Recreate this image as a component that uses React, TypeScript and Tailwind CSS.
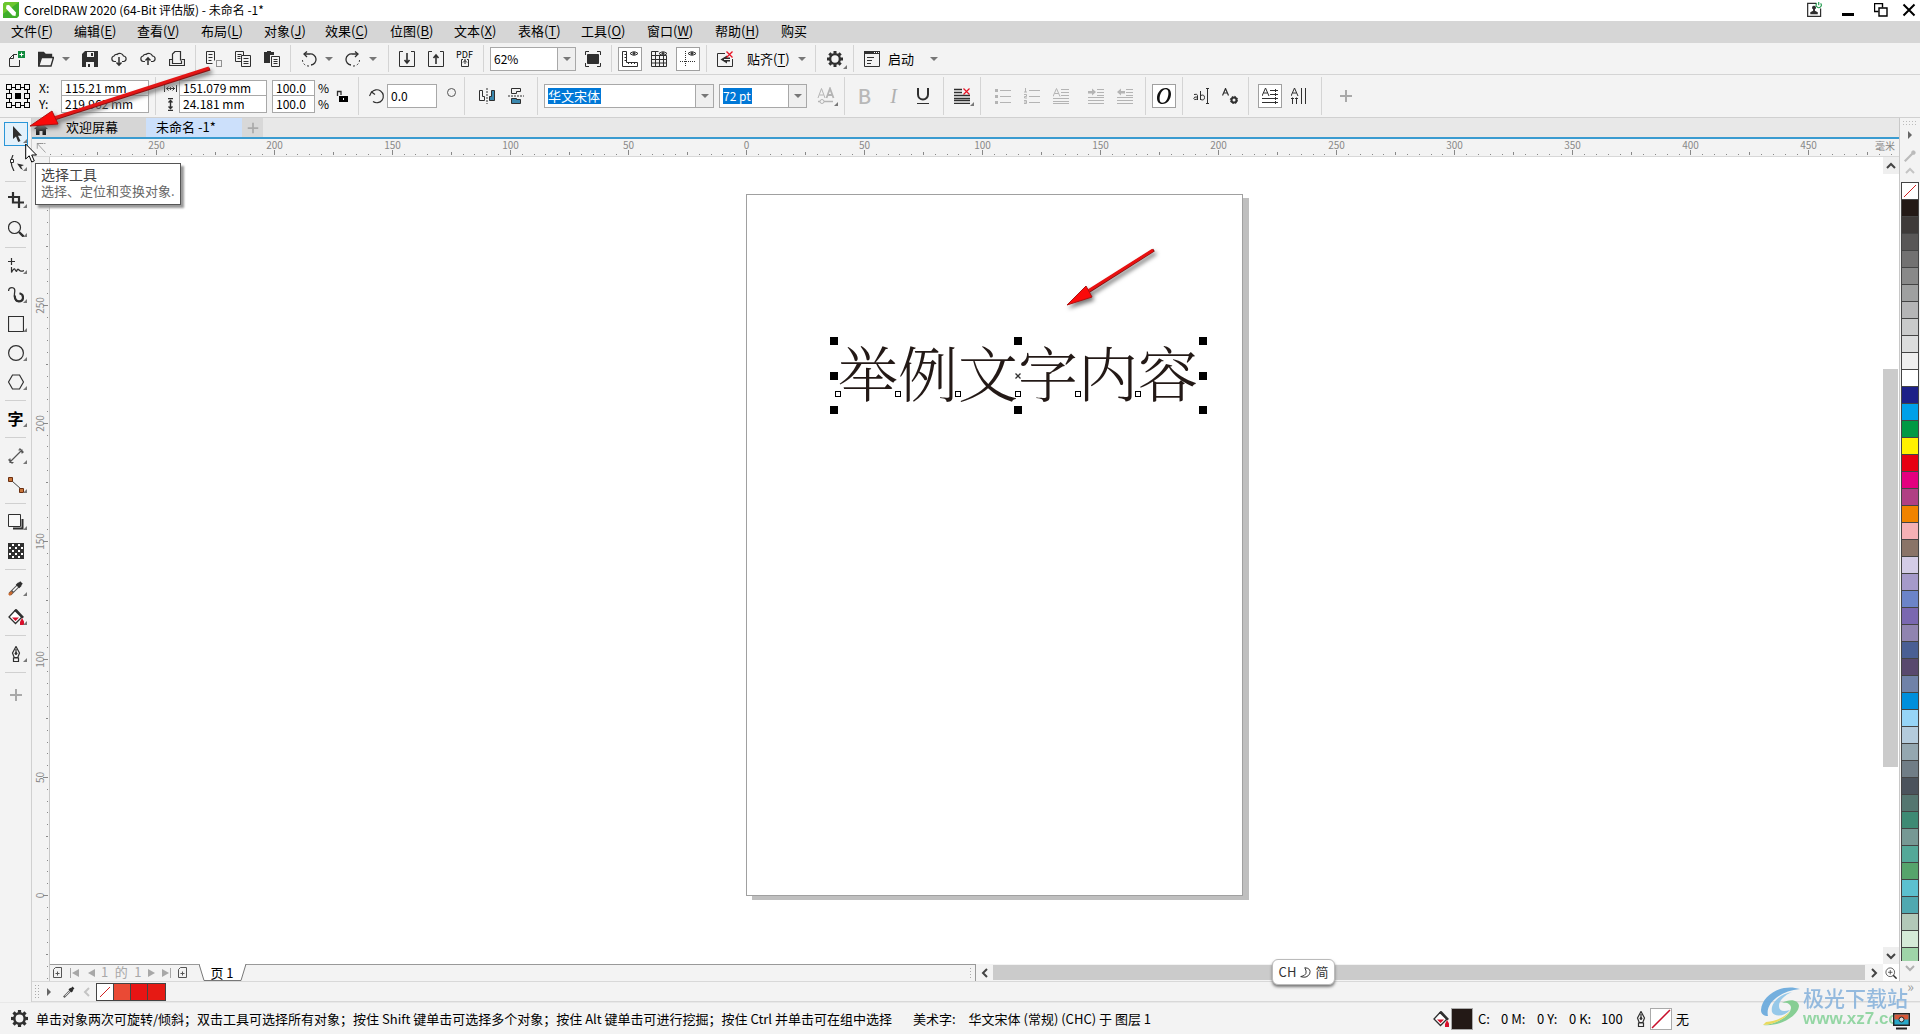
import React from "react";
import type { ReactNode } from "react";

const INK = "#2f2f2f";

/* ---------- icon base ---------- */

function Ico({ children, size = 16, box = 16, stroke = INK, sw = 1, fill = "none" }: {
  children: ReactNode; size?: number; box?: number; stroke?: string; sw?: number; fill?: string;
}) {
  return (
    <svg width={size} height={size} viewBox={`0 0 ${box} ${box}`} fill={fill} stroke={stroke} strokeWidth={sw} className="block shrink-0" aria-hidden="true">
      {children}
    </svg>
  );
}

const gearTeeth = [0, 45, 90, 135, 180, 225, 270, 315];
function Gear({ size = 16 }: { size?: number }) {
  return (
    <Ico size={size}>
      <circle cx="8" cy="8" r="4.9" strokeWidth="2.4" />
      {gearTeeth.map((a) => (
        <rect key={a} x="6.5" y="0" width="3" height="2.6" fill={INK} stroke="none" transform={`rotate(${a} 8 8)`} />
      ))}
    </Ico>
  );
}

const I = {
  create: (
    <Ico>
      <path d="M8 3.500H4.500L.5 7.500v8h10V9M4.500 3.500v4h-4" />
      <path d="M9 0h7v7H9z" fill="#108a3c" stroke="none" />
      <path d="M12.500 1.500v4M10.500 3.500h4" stroke="#fff" />
    </Ico>
  ),
  open: (
    <Ico>
      <path d="M.5 15V1.500h5l2 2h6V6" strokeWidth="1.400" />
      <path d="M3.500 6.500h12l-2.500 8.500H.7z" strokeWidth="1.400" />
      <path d="M.5 1.500h5l2 2h6V6h-10L1 13z" fill={INK} stroke="none" />
    </Ico>
  ),
  save: (
    <Ico>
      <path d="M3 0h13v16H0V3z" fill={INK} stroke="none" />
      <path d="M5 1h7v5H5zM4 11h8v5H4z" fill="#f3f3f3" stroke="none" />
      <path d="M9 2h2v3H9zM6 13h2v3H6z" fill={INK} stroke="none" />
    </Ico>
  ),
  cloudDown: (
    <Ico>
      <path d="M5 10.500H3.300a2.800 2.800 0 0 1-.3-5.500A3 3 0 0 1 6 3.500 4 4 0 0 1 12.500 5a2.800 2.800 0 0 1 .5 5.500h-2" strokeWidth="1.200" />
      <path d="M8 6v8M5.500 11.500 8 14.200l2.500-2.700" strokeWidth="1.500" />
    </Ico>
  ),
  cloudUp: (
    <Ico>
      <path d="M5 10.500H3.300a2.800 2.800 0 0 1-.3-5.500A3 3 0 0 1 6 3.500 4 4 0 0 1 12.500 5a2.800 2.800 0 0 1 .5 5.500h-2" strokeWidth="1.200" />
      <path d="M8 14V7M5.500 9.500 8 6.800l2.500 2.700" strokeWidth="1.500" />
    </Ico>
  ),
  print: (
    <Ico>
      <path d="M3.500 9.500V3L6 .5h5.500v9M3.500 8.500h-3v6h15v-6h-3M3.500 9.500v3h9v-3" strokeWidth="1.200" />
    </Ico>
  ),
  cut: (
    <Ico>
      <path d="M8.500 9.500V.5h-8v12h6M2.500 3.500h4M2.500 6.500h4M2.500 9.500h3" />
      <path d="M10.500 9.500h5v6h-5z" strokeDasharray="1 1" />
    </Ico>
  ),
  copy: (
    <Ico>
      <path d="M6 10.500H.5V.5h8V4M2.500 3.500h4M2.500 5.500h3M2.500 7.500h3" />
      <path d="M6.500 4.500h9v11h-9zM8.500 7.500h5M8.500 10.500h5M8.500 12.500h5" />
    </Ico>
  ),
  paste: (
    <Ico>
      <path d="M0 1h3V0h4v1h3v3H6v8H0z" fill={INK} stroke="none" />
      <path d="M7.500 5.500h8v10h-8zM9.500 8.500h4M9.500 10.500h4M9.500 12.500h4" />
    </Ico>
  ),
  undo: (
    <Ico>
      <path d="M4 3h5a5.500 5.500 0 0 1 1 11" strokeWidth="1.300" />
      <path d="M8 15a6 6 0 0 1-6.500-6" strokeDasharray="2 2" />
      <path d="M6 .5 3 3l3 3" strokeWidth="1.300" />
    </Ico>
  ),
  redo: (
    <Ico>
      <path d="M12 3H7a5.500 5.500 0 0 0-1 11" strokeWidth="1.300" />
      <path d="M8 15a6 6 0 0 0 6.500-6" strokeDasharray="2 2" />
      <path d="M10 .5 13 3l-3 3" strokeWidth="1.300" />
    </Ico>
  ),
  imp: (
    <Ico>
      <path d="M4 .5H.5v15h15V.5H12" />
      <path d="M8 2v10M5.500 9 8 12l2.500-3" strokeWidth="1.600" />
    </Ico>
  ),
  exp: (
    <Ico>
      <path d="M4 .5H.5v15h15V.5H12" />
      <path d="M8 13V4M5.500 7 8 4l2.500 3" strokeWidth="1.600" />
    </Ico>
  ),
  full: (
    <Ico>
      <path d="M2.500 3.500h11v9h-11z" fill={INK} />
      <path d="M.5 4V.5H4M12 .5h3.500V4M15.500 12v3.500H12M4 15.500H.5V12" />
    </Ico>
  ),
  ruler: (
    <Ico>
      <path d="M.5.5h4v11h11v4H.5zM2.500 3.500h2M2.500 6.500h2M2.500 9.500h2M6.500 13v-1.500M9.500 13v-1.500M12.500 13v-1.500" />
      <path d="M8 2.500q4-3.500 8 0-4 3.500-8 0z" />
      <circle cx="12" cy="2.500" r="1" fill={INK} />
    </Ico>
  ),
  grid: (
    <Ico>
      <path d="M.5 15.500V.5h7M.5 15.500h15v-11M.5 4.500h15M.5 8.500h15M.5 12h15M4.500.5v15M8.500 4v11.500M12.500 5v10" />
      <path d="M8 2.500q4-3.500 8 0-4 3.500-8 0z" />
      <circle cx="12" cy="2.500" r="1" fill={INK} />
    </Ico>
  ),
  guides: (
    <Ico>
      <path d="M5.500 0v16M0 10.500h16" strokeDasharray="1 1" />
      <path d="M8 2.500q4-3.500 8 0-4 3.500-8 0z" />
      <circle cx="12" cy="2.500" r="1" fill={INK} />
    </Ico>
  ),
  snapOff: (
    <Ico>
      <path d="M8 2.500H.5v13h15V8" />
      <path d="M10 4.500 3.500 8.500l6.500 4V10.500h3V6.500h-3z" fill={INK} stroke="none" />
      <path d="M7 8.500h6" stroke="#f3f3f3" />
      <path d="m9.500.5 6 6m0-6-6 6" stroke="#e81123" strokeWidth="1.300" />
    </Ico>
  ),
  launch: (
    <Ico>
      <path d="M.5.5h15v15H.5zM3 6.500h7M3 9.500h5M3 12.500h4" />
      <path d="M0 0h16v3H0z" fill={INK} stroke="none" />
      <path d="M10 1.500h1M12 1.500h1M14 1.500h1" stroke="#fff" />
    </Ico>
  ),
  alignX: (
    <Ico>
      <path d="M0 1.500h8M0 4.500h8M0 7.500h16M0 10.500h16M0 12.500h16M0 15.500h16" strokeWidth="1.300" />
      <path d="m9.500.5 6 6m0-6-6 6" stroke="#e81123" strokeWidth="1.200" />
    </Ico>
  ),
  bullets: (
    <Ico stroke="#b4b4b4">
      <path d="M5 2.500h11M5 8.500h11M5 14.500h11" />
      <path d="M0 1h3v3H0zM0 7h3v3H0zM0 13h3v3H0z" fill="#b4b4b4" stroke="none" />
    </Ico>
  ),
  numbers: (
    <Ico stroke="#b4b4b4">
      <path d="M5 2.500h11M5 8.500h11M5 14.500h11M1.500 0v4M0 4h3M0 6.500h2.500v2H.5v1.500H3M0 12.500h2.500v3H0M0 14h2" />
    </Ico>
  ),
  dropCap: (
    <Ico stroke="#b4b4b4">
      <path d="M0 8.500 3.500.5 7 8.500M1.500 5.500h4M8 1.500h8M8 4.500h8M8 7.500h8M0 10.500h16M0 13.500h16M0 15.500h16" />
    </Ico>
  ),
  indent: (
    <Ico stroke="#b4b4b4">
      <path d="M9 1.500h7M9 4.500h7M9 7.500h7M0 9.500h16M0 12.500h16M0 15.500h16" />
      <path d="M0 3h4V.5L8 4 4 7.500V5.500H0z" fill="#b4b4b4" stroke="none" />
    </Ico>
  ),
  outdent: (
    <Ico stroke="#b4b4b4">
      <path d="M9 1.500h7M9 4.500h7M9 7.500h7M0 9.500h16M0 12.500h16M0 15.500h16" />
      <path d="M8 3H4V.5L0 4l4 3.500V5.500h4z" fill="#b4b4b4" stroke="none" />
    </Ico>
  ),
  horizText: (
    <Ico>
      <path d="M0 8 3.500 0 7 8M1.500 5h4M8 2.500h8M8 6.500h8M0 10.500h16M0 14.500h16M13.500 1v3M13.500 5v3M13.500 9v3M13.500 13v3" />
    </Ico>
  ),
  vertText: (
    <Ico>
      <path d="M0 8 3.500 0 7 8M1.500 5h4M1.500 9.500v6.500M5.500 9.500v6.500M10.500 0v16M14.500 0v16M0 10.500h3M4 10.500h3" />
    </Ico>
  ),
  charGear: (
    <svg width="16" height="16" viewBox="0 0 16 16" fill="none" stroke={INK} className="block" aria-hidden="true">
      <path d="M.5 7.500 3.500.5l3 7M1.500 5h4" strokeWidth="1.200" />
      <circle cx="12" cy="12" r="2.500" strokeWidth="2" />
      <circle cx="12" cy="12" r="3.700" strokeWidth="1" strokeDasharray="1.500 1.400" />
    </svg>
  ),
  editText: (
    <Ico>
      <path d="M13 .5h3M13 15.500h3M14.500 1v14M1 6.500q3.500-1 3.500 1V12M4.500 9Q.8 8.500.8 10.500t3.700.5M7.500 3v9M7.500 7.500q4-1.500 4 2t-4 2" />
    </Ico>
  ),
  outlineA: (
    <Ico stroke="#b4b4b4" size={18} box={18}>
      <path d="M1 11 4.500 1.500 8 11M2.500 8h4" />
      <path d="M9.500 11 13 1.500 16.500 11M11 8h4" strokeWidth="1.800" />
      <path d="M1 14.500h15" strokeWidth="1.500" />
      <circle cx="5" cy="14.500" r="2" fill="#f3f3f3" />
    </Ico>
  ),
  mirrorH: (
    <Ico>
      <path d="M.5 2.500h3v6h2v4h-5z" />
      <path d="M15.500 2.500h-3v6h-2v4h5z" fill="#3a87ad" />
      <path d="M8 0v16" strokeDasharray="2 1" />
    </Ico>
  ),
  mirrorV: (
    <Ico>
      <path d="M12.500.5v3h-4v2h-5V.5z" />
      <path d="M12.500 15.500v-4h-4v-1h-5v5z" fill="#3a87ad" />
      <path d="M0 8h16" strokeDasharray="2 1" />
    </Ico>
  ),
  rotate: (
    <Ico>
      <path d="M2.500 4.500A6.500 6.500 0 1 1 4 13.500" strokeWidth="1.200" />
      <path d="M.5 8 2.500 4l3.500 2.500" strokeWidth="1.200" />
    </Ico>
  ),
  widthI: (
    <Ico size={13} box={13}>
      <path d="M.5 3v7M12.500 3v7M2 6.500h9M4.500 4.500l-2 2 2 2M8.500 4.500l2 2-2 2M6.500 5v3" />
    </Ico>
  ),
  heightI: (
    <Ico size={13} box={13}>
      <path d="M4 .5h5M4 12.500h5M6.500 2v9M4.500 4.500l2-2 2 2M4.500 8.500l2 2 2-2" strokeWidth="1.400" />
    </Ico>
  ),
  lock: (
    <Ico size={13} box={13}>
      <path d="M1.500 6V1.500h3.500V5" strokeWidth="1.300" />
      <path d="M3 6h9v6H3z" fill="#000" stroke="none" />
      <path d="M7.500 8v2" stroke="#fff" />
    </Ico>
  ),
};

const T = {
  pick: <Ico><path d="M5 0v13l3-2.500L10.200 16l2.300-1L10 9.800h4z" fill={INK} stroke="none" /></Ico>,
  shape: (
    <Ico>
      <path d="M5 0Q1 8 6 16" strokeWidth="1.200" />
      <path d="M2.500 4.500h3v3h-3z" fill="#fff" />
      <path d="M9 8.500 16 10l-3 1.500L15 15l-2.500-1.500z" fill={INK} stroke="none" />
    </Ico>
  ),
  crop: <Ico sw={2.2}><path d="M5 0v10.500h11M0 5h11v11" strokeWidth="2.200" /></Ico>,
  zoom: (
    <Ico>
      <circle cx="6.500" cy="6.500" r="6" strokeWidth="1.200" />
      <path d="m11 11 5 5" strokeWidth="2.400" />
    </Ico>
  ),
  free: <Ico><path d="M3.500 0v7M0 3.500h7M3.500 9v5.500q2.500-5 3.500-3t1.500 2q1-3 2-2t2 1.500 3.500-.5" strokeWidth="1.200" /></Ico>,
  art: (
    <Ico>
      <path d="M.6 4Q.6.7 4 .7 7.500.7 6.600 5.500 5.500 14.500 11 14.500" strokeWidth="1.300" />
      <path d="M6.700 8.500Q7 14.300 11 14.300q4 0 4-4 0-3-3.500-4" strokeWidth="2.200" />
    </Ico>
  ),
  rect: <Ico><path d="M.5.5h15v15H.5z" strokeWidth="1.200" /></Ico>,
  ellipse: <Ico><circle cx="8" cy="8" r="7.400" strokeWidth="1.200" /></Ico>,
  poly: <Ico><path d="M4.500 1h7L15.500 8l-4 7h-7L.5 8z" strokeWidth="1.200" /></Ico>,
  text: <span className="pb-0.5 text-base font-bold leading-4">字</span>,
  dim: <Ico stroke="#555"><path d="M2.500 13.500l11-11M.5 11.500l4 4M11.500.5l4 4M2 10.500v4h3.500M10.500 2h3.500v3.500" strokeWidth="1.200" /></Ico>,
  conn: (
    <Ico stroke="#6b2f10">
      <path d="m4 4 9 8" stroke="#444" />
      <path d="M.5.5h4v4h-4zM11.500 11.500h4v4h-4z" fill="#c87438" />
    </Ico>
  ),
  shadow: (
    <Ico>
      <path d="M14.500 5v9.500H5" strokeWidth="2" />
      <path d="M.5.5h12v12H.5z" fill="#f8f8f8" />
    </Ico>
  ),
  checker: (
    <svg width="16" height="16" viewBox="0 0 16 16" shapeRendering="crispEdges" className="block" aria-hidden="true">
      <path d="M0 0h16v16H0z" fill={INK} />
      {Array.from({ length: 25 }, (_, i) => i).filter((i) => i % 2 === 1).map((i) => (
        <rect key={i} x={1 + (i % 5) * 3} y={1 + Math.floor(i / 5) * 3} width="2" height="2" fill="#fff" />
      ))}
    </svg>
  ),
  dropper: (
    <Ico>
      <path d="m2 14 8-8" strokeWidth="3.600" stroke="#555" />
      <path d="m5 11 5-5" strokeWidth="1.600" stroke="#fff" />
      <path d="m1 15 3-3" strokeWidth="2.600" stroke="#c8682e" />
      <path d="M9 3.500 12.500 7M11 5l2.500-2.500" strokeWidth="3.600" />
    </Ico>
  ),
  fill: (
    <Ico>
      <path d="M7.500 1 14 8l-6.500 6.500L1 8z" fill="#fff" strokeWidth="1.300" />
      <path d="M6 1.500 8.500 0 16 8l-2 1.500z" fill={INK} stroke="none" />
      <path d="M4 8.500h7L7.500 12zM14 9l2 3.500V16h-4v-3z" fill="#d8102c" stroke="none" />
    </Ico>
  ),
  pen: (
    <Ico>
      <path d="M8 .5 4.500 7l1.700 4.500h3.600L11.500 7zM8 3v5M5.500 12h5v3.500h-5z" strokeWidth="1.200" />
      <circle cx="8" cy="7.500" r="1" fill={INK} />
    </Ico>
  ),
  plus: <Ico stroke="#a9a9a9"><path d="M8 2v12M2 8h12" strokeWidth="2" /></Ico>,
};

/* ---------- small parts ---------- */

function Corner() {
  return <svg width="4" height="4" viewBox="0 0 4 4" className="absolute right-0 bottom-0.5" aria-hidden="true"><path d="M4 0v4H0z" fill="#777" /></svg>;
}
function Cell({ label, children, on, corner }: { label: string; children: ReactNode; on?: boolean; corner?: boolean }) {
  return (
    <div className="flex w-[29px] shrink-0 justify-center">
      <button aria-label={label} className={on ? "relative flex size-6 items-center justify-center border border-[#a0a0a0] bg-white" : "relative flex size-6 items-center justify-center"}>
        {children}
        {corner && <Corner />}
      </button>
    </div>
  );
}
function Tri() {
  return <svg width="8" height="4" viewBox="0 0 8 4" className="block" aria-hidden="true"><path d="M0 0h8L4 4z" fill="#777" /></svg>;
}
function Caret({ label }: { label: string }) {
  return <button aria-label={label} className="flex h-6 w-[11px] shrink-0 items-center justify-center"><Tri /></button>;
}
function Sep() {
  return <div className="flex w-2 shrink-0 justify-center self-stretch py-0.5"><div className="w-px bg-[#d4d4d4]" /></div>;
}

const menus: [string, string, string][] = [
  ["文件", "F", "w-[63px]"], ["编辑", "E", "w-[63px]"], ["查看", "V", "w-16"], ["布局", "L", "w-[63px]"], ["对象", "J", "w-[61px]"],
  ["效果", "C", "w-[65px]"], ["位图", "B", "w-16"], ["文本", "X", "w-16"], ["表格", "T", "w-[63px]"], ["工具", "O", "w-[66px]"],
  ["窗口", "W", "w-[68px]"], ["帮助", "H", "w-[66px]"], ["购买", "", "w-16"],
];

function TitleBar() {
  return (
    <header className="flex h-[21px] shrink-0 items-center bg-white pb-0.5 pl-[3px] pr-1">
      <svg width="16" height="16" viewBox="0 0 16 16" aria-hidden="true">
        <path d="M2 0h14v14l-2 2H0V2z" fill="#3fae2a" />
        <path d="M2 0h14L0 12V2z" fill="#6cc62e" />
        <path d="M3.500 3.200 6 3l7 7.500-.5 3.500-3-.5L3 6.500z" fill="#fff" />
      </svg>
      <h1 className="ml-[5px] whitespace-nowrap text-xs leading-[18px]">CorelDRAW 2020 (64-Bit 评估版) - 未命名 -1*</h1>
      <div className="ml-auto flex items-center">
        <button aria-label="账户" className="mr-5">
          <Ico size={15}>
            <path d="M10 1.500H.7v13.800h13.800V7" strokeWidth="1.300" />
            <path d="M7.500 4a2 2 0 0 1 1 3.800v1.500l3 1.700v2H3.500v-2l3-1.700V7.800A2 2 0 0 1 7.500 4z" fill={INK} stroke="none" />
            <path d="M10.500 1.500a2.700 2.700 0 1 0 4 0M12.500 0v3.500" stroke="#1f9a4c" strokeWidth="1.200" />
          </Ico>
        </button>
        <button aria-label="最小化" className="mr-5 flex h-4 w-3 items-end pb-0.5"><span className="h-[3px] w-full bg-black" /></button>
        <button aria-label="还原" className="mr-3.5">
          <Ico size={14} box={14} stroke="#000"><path d="M4.500 8.500h-4v-8h8v4" strokeWidth="1.400" /><path d="M5 5h8v8H5z" strokeWidth="1.400" /></Ico>
        </button>
        <button aria-label="关闭"><Ico size={14} box={14} stroke="#000"><path d="m1.500 1.500 11 11m0-11-11 11" strokeWidth="2" /></Ico></button>
      </div>
    </header>
  );
}

function MenuBar() {
  return (
    <nav className="flex h-[22px] shrink-0 items-center bg-[#d6d6d6] pb-0.5 pl-[11px] text-[13px]">
      {menus.map(([t, k, w]) => (
        <button key={t} className={`${w} whitespace-nowrap text-left leading-5`}>
          {t}{k && <>(<u className="underline-offset-2">{k}</u>)</>}
        </button>
      ))}
    </nav>
  );
}

function Toolbar() {
  return (
    <div className="flex h-8 shrink-0 items-center border-b border-[#d4d4d4] pl-0.5">
      <Cell label="新建">{I.create}</Cell>
      <Cell label="打开">{I.open}</Cell>
      <Caret label="最近文件" />
      <div className="w-1" />
      <Cell label="保存">{I.save}</Cell>
      <Cell label="云下载">{I.cloudDown}</Cell>
      <Cell label="云上传">{I.cloudUp}</Cell>
      <Cell label="打印">{I.print}</Cell>
      <Sep />
      <Cell label="剪切">{I.cut}</Cell>
      <Cell label="复制">{I.copy}</Cell>
      <Cell label="粘贴">{I.paste}</Cell>
      <Sep />
      <Cell label="撤消">{I.undo}</Cell>
      <Caret label="撤消列表" />
      <div className="w-1" />
      <Cell label="重做">{I.redo}</Cell>
      <Caret label="重做列表" />
      <div className="w-1.5" />
      <Sep />
      <Cell label="导入">{I.imp}</Cell>
      <Cell label="导出">{I.exp}</Cell>
      <button aria-label="发布为 PDF" className="flex w-[29px] flex-col items-center text-[9px] leading-[8px]">
        PDF
        <Ico size={8} box={8}><path d="M2 .5H.5v7h7v-7H6M4 0v5M2 3.500l2-2 2 2" /></Ico>
      </button>
      <Sep />
      <div className="relative ml-[3px] h-6 w-[86px] border border-[#a8a8a8] bg-white">
        <select aria-label="缩放级别" defaultValue="62%" className="block size-full appearance-none bg-transparent pl-[3px] text-xs outline-none">
          <option>62%</option><option>100%</option>
        </select>
        <div className="pointer-events-none absolute inset-y-0 right-0 flex w-[18px] items-center justify-center border-l border-[#a8a8a8] bg-[#efefef]"><Tri /></div>
      </div>
      <div className="w-0.5" />
      <Cell label="全屏预览">{I.full}</Cell>
      <Sep />
      <Cell label="显示标尺" on>{I.ruler}</Cell>
      <Cell label="显示网格">{I.grid}</Cell>
      <Cell label="显示辅助线" on>{I.guides}</Cell>
      <Sep />
      <Cell label="关闭贴齐">{I.snapOff}</Cell>
      <button className="ml-2 w-[49px] whitespace-nowrap text-left text-[13px]">贴齐(<u className="underline-offset-2">T</u>)</button>
      <Caret label="贴齐选项" />
      <div className="w-1" />
      <Sep />
      <div className="w-px" />
      <Cell label="选项" corner><Gear /></Cell>
      <Sep />
      <Cell label="启动器">{I.launch}</Cell>
      <button className="ml-0.5 w-10 text-left text-[13px]">启动</button>
      <Caret label="启动列表" />
    </div>
  );
}

function Pair({ a, b, la, lb, w }: { a: string; b: string; la: string; lb: string; w: string }) {
  return (
    <div className={`${w} flex h-[33px] shrink-0 flex-col divide-y divide-[#a8a8a8] border border-[#a8a8a8] bg-white`}>
      <input aria-label={la} defaultValue={a} className="h-[15px] w-full bg-transparent pl-[3px] text-xs leading-[15px] outline-none" />
      <input aria-label={lb} defaultValue={b} className="h-4 w-full bg-transparent pl-[3px] text-xs leading-[15px] outline-none" />
    </div>
  );
}

function Combo({ label, value, w, sel }: { label: string; value: string; w: string; sel: string }) {
  return (
    <div className={`${w} flex h-6 shrink-0 items-center border border-[#a8a8a8] bg-white pl-[3px]`}>
      <input aria-label={label} defaultValue={value} className={`${sel} h-4 bg-[#0078d7] leading-4 text-white outline-none`} />
      <button aria-label={`${label}列表`} className="ml-auto flex h-full w-[18px] items-center justify-center border-l border-[#a8a8a8] bg-[#efefef]"><Tri /></button>
    </div>
  );
}

const refPoints = [0, 9, 18];
function PropertyBar() {
  return (
    <div className="flex h-[43px] shrink-0 items-center border-b border-[#d0d0d0] pl-1.5">
      <button aria-label="对象原点">
        <svg width="24" height="24" viewBox="0 0 24 24" fill="none" stroke="#000" shapeRendering="crispEdges" className="block">
          <path d="M3 3h18v18H3z" />
          {refPoints.map((y) => refPoints.map((x) => (
            <rect key={`${x}-${y}`} x={x + 0.5} y={y + 0.5} width="5" height="5" fill={x === 9 && y === 9 ? "#000" : "#f3f3f3"} />
          )))}
        </svg>
      </button>
      <div className="ml-[9px] w-[22px] text-xs leading-4"><div>X:</div><div>Y:</div></div>
      <Pair la="X 坐标" lb="Y 坐标" a="115.21 mm" b="219.962 mm" w="w-[88px]" />
      <div className="w-0.5" />
      <Sep />
      <div className="ml-[5px] flex w-[15px] flex-col gap-[3px]">{I.widthI}{I.heightI}</div>
      <Pair la="宽度" lb="高度" a="151.079 mm" b="24.181 mm" w="w-[88px]" />
      <div className="w-[5px]" />
      <Pair la="水平缩放" lb="垂直缩放" a="100.0" b="100.0" w="w-[43px]" />
      <div className="ml-[3px] w-[18px] text-xs leading-4"><div>%</div><div>%</div></div>
      <button aria-label="锁定比率" className="w-[18px]">{I.lock}</button>
      <Sep />
      <span className="ml-[7px] mr-0.5">{I.rotate}</span>
      <input aria-label="旋转角度" defaultValue="0.0" className="h-6 w-[50px] shrink-0 border border-[#a8a8a8] bg-white pb-0.5 pl-[3px] text-xs outline-none" />
      <span className="mb-2 ml-2.5 size-[9px] rounded-full border border-[#555]" />
      <div className="w-1" />
      <Sep />
      <div className="w-1" />
      <Cell label="水平镜像">{I.mirrorH}</Cell>
      <Cell label="垂直镜像">{I.mirrorV}</Cell>
      <div className="w-[3px]" />
      <Sep />
      <div className="w-[3px]" />
      <Combo label="字体" value="华文宋体" w="w-[170px]" sel="w-[53px] text-[13px]" />
      <div className="w-[5px]" />
      <Combo label="字号" value="72 pt" w="w-[88px]" sel="w-[29px] text-xs" />
      <div className="w-1" />
      <Cell label="增大字号" corner>{I.outlineA}</Cell>
      <Sep />
      <div className="w-0.5" />
      <Cell label="粗体"><span className="text-xl font-medium text-[#b8b8b8]">B</span></Cell>
      <Cell label="斜体"><span className="font-['Liberation_Serif'] text-xl italic text-[#b0b0b0]">I</span></Cell>
      <Cell label="下划线"><Ico><path d="M3 0v6.500a5 5 0 0 0 10 0V0" strokeWidth="2" /><path d="M2 15.500h12" /></Ico></Cell>
      <div className="w-0.5" />
      <Sep />
      <Cell label="文本对齐" corner>{I.alignX}</Cell>
      <Sep />
      <div className="w-1" />
      <Cell label="项目符号列表">{I.bullets}</Cell>
      <Cell label="编号列表">{I.numbers}</Cell>
      <Cell label="首字下沉">{I.dropCap}</Cell>
      <div className="w-1.5" />
      <Cell label="增加缩进">{I.indent}</Cell>
      <Cell label="减少缩进">{I.outdent}</Cell>
      <div className="w-0.5" />
      <Sep />
      <Cell label="交互式 OpenType" on>
        <Ico>
          <path fillRule="evenodd" d="M9.800 0C4.500 0 1 5 1 10c0 3.700 2 6 5.200 6C11.500 16 15 11 15 6c0-3.700-2-6-5.200-6zM9.600 1.200c2 0 2.800 1.600 2.800 4C12.400 9.500 10 14.800 6.500 14.800c-2 0-2.900-1.600-2.900-4 0-4.300 2.400-9.600 6-9.600z" fill="#111" stroke="none" />
        </Ico>
      </Cell>
      <Sep />
      <Cell label="编辑文本">{I.editText}</Cell>
      <Cell label="文本属性">{I.charGear}</Cell>
      <Sep />
      <div className="w-[3px]" />
      <Cell label="水平方向文本" on>{I.horizText}</Cell>
      <Cell label="垂直方向文本">{I.vertText}</Cell>
      <div className="w-1" />
      <Sep />
      <div className="w-1.5" />
      <Cell label="自定义">{T.plus}</Cell>
    </div>
  );
}

const tools: (null | [string, ReactNode, boolean])[] = [
  ["形状工具", T.shape, true], null, ["裁剪工具", T.crop, true], ["缩放工具", T.zoom, true], null,
  ["手绘工具", T.free, true], ["艺术笔工具", T.art, true], ["矩形工具", T.rect, true], ["椭圆形工具", T.ellipse, true], ["多边形工具", T.poly, true], null,
  ["文本工具", T.text, true], null, ["平行度量工具", T.dim, true], ["连接器工具", T.conn, true], null,
  ["阴影工具", T.shadow, true], ["透明度工具", T.checker, false], null, ["颜色滴管工具", T.dropper, true], ["交互式填充工具", T.fill, true], null,
  ["轮廓笔", T.pen, true], null,
];

function Toolbox() {
  return (
    <aside className="relative flex w-8 shrink-0 flex-col items-center border-r border-[#d0d0d0] pt-px">
      <div className="flex h-[29px] items-center">
        <button aria-label="选择工具" className="relative flex size-6 items-center justify-center border border-[#2a96d8] bg-[#e3f1fb]">{T.pick}<Corner /></button>
      </div>
      {tools.map((t, i) => t === null
        ? <div key={i} className="flex h-2 w-full items-center px-[5px]"><div className="h-px w-full bg-[#d0d0d0]" /></div>
        : (
          <button key={i} aria-label={t[0]} className="relative flex h-[29px] w-full items-center justify-center">
            {t[1]}
            {t[2] && <span className="absolute bottom-1 right-1"><Corner /></span>}
          </button>
        ))}
      <button aria-label="自定义工具箱" className="mt-1 flex h-[29px] items-center">{T.plus}</button>
      <div role="tooltip" className="absolute left-[35px] top-[45px] z-20 h-[42px] w-[146px] border border-[#555] bg-white pl-[5px] pt-0.5 text-[#444] shadow-[3px_3px_2px_#9a9a9a]">
        <div className="whitespace-nowrap text-sm leading-4">选择工具</div>
        <div className="whitespace-nowrap text-[13px] leading-[18px] text-[#666]">选择、定位和变换对象.</div>
      </div>
      <svg width="13" height="20" viewBox="0 0 13 20" className="absolute left-[25px] top-[25px] z-30" aria-hidden="true">
        <path d="M.7 1v15l3.500-3.200L6.700 19l2.600-1.100L6.700 12h4.800z" fill="#fff" stroke="#000" />
      </svg>
    </aside>
  );
}

/* ruler geometry: pixels per millimetre */
const MM = 2.361;
const hTicks = Array.from({ length: 160 }, (_, i) => (i - 59) * 5);
const vTicks = Array.from({ length: 73 }, (_, i) => (i - 7) * 5);

function HRuler() {
  const x = (mm: number) => Math.round(696 + mm * MM) + 0.5;
  return (
    <svg className="block h-full min-w-0 flex-1 overflow-visible font-['Noto_Sans_CJK_SC',sans-serif]" aria-label="水平标尺">
      {hTicks.filter((mm) => mm <= 485).map((mm) => <path key={mm} d={`M${x(mm)} ${mm % 50 === 0 ? 11 : mm % 25 === 0 ? 13 : 15}V16`} stroke="#888" />)}
      {hTicks.filter((mm) => mm % 50 === 0 && mm > -290 && mm < 460).map((mm) => (
        <text key={mm} x={x(mm)} y="10" textAnchor="middle" fontSize="10" fill="#888">{Math.abs(mm)}</text>
      ))}
    </svg>
  );
}

function VRuler() {
  const y = (mm: number) => Math.round(738 - mm * MM) + 0.5;
  return (
    <svg className="block w-full flex-1 font-['Noto_Sans_CJK_SC',sans-serif]" aria-label="垂直标尺">
      {vTicks.map((mm) => <path key={mm} d={`M${mm % 50 === 0 ? 11 : mm % 25 === 0 ? 14 : 15} ${y(mm)}H16`} stroke="#888" />)}
      {vTicks.filter((mm) => mm % 50 === 0 && mm >= 0 && mm < 300).map((mm) => (
        <text key={mm} transform={`translate(12 ${y(mm)}) rotate(-90)`} textAnchor="middle" fontSize="10" fill="#888">{mm}</text>
      ))}
    </svg>
  );
}

function Chevron({ d, c = "#444" }: { d: "up" | "down" | "left" | "right"; c?: string }) {
  const paths = { up: "M1 7l4-4 4 4", down: "M1 3l4 4 4-4", left: "M7 1L3 5l4 4", right: "M3 1l4 4-4 4" };
  return <svg width="10" height="10" viewBox="0 0 10 10" fill="none" stroke={c} strokeWidth="2" className="block" aria-hidden="true"><path d={paths[d]} /></svg>;
}

const handles = ["left-0 top-0", "left-[184px] top-0", "right-0 top-0", "left-0 top-[35px]", "right-0 top-[35px]", "bottom-0 left-0", "bottom-0 left-[184px]", "bottom-0 right-0"];
const nodes = ["left-[5px]", "left-[65px]", "left-[125px]", "left-[185px]", "left-[245px]", "left-[305px]"];

function Canvas() {
  return (
    <main className="relative min-w-0 flex-1 overflow-hidden bg-white">
      <div className="absolute left-[696px] top-[37px] h-[702px] w-[497px] border border-[#a0a0a0] bg-white shadow-[6px_4px_0_#bfbfbf]">
        <div className="absolute left-[83px] top-[142px] h-[77px] w-[377px]">
          <p className="absolute left-2 top-1 whitespace-nowrap font-['Noto_Serif_CJK_SC','Noto_Sans_CJK_SC',serif] text-[60px] font-light leading-[60px] text-[#231916]">举例文字内容</p>
          {handles.map((h) => <span key={h} className={`${h} absolute size-2 bg-black`} />)}
          {nodes.map((n) => <span key={n} className={`${n} absolute top-[54px] size-1.5 border border-black bg-white`} />)}
          <svg width="6" height="6" viewBox="0 0 6 6" className="absolute left-[185px] top-9" stroke="#333" aria-hidden="true"><path d="m.5.5 5 5m0-5-5 5" strokeWidth="1.300" /></svg>
        </div>
        <svg width="100" height="70" viewBox="0 0 100 70" className="absolute left-[315px] top-[48px] drop-shadow-[2px_3px_2px_#777]" aria-hidden="true">
          <path d="M92 7 26 49" stroke="#7a1010" strokeWidth="3" />
          <path d="M91 7 26 48" stroke="#e81010" strokeWidth="3" />
          <path d="M5 62 24 43l6 11z" fill="#fb0a0a" stroke="#b01010" strokeWidth="1" />
        </svg>
      </div>
    </main>
  );
}

function PageIcon() {
  return <Ico size={11} box={11} stroke="#555"><path d="M3.500.5h6v10h-8v-8zM3.500 6.500h4M5.500 4.500v4" /></Ico>;
}
function NavTri({ flip, bar }: { flip?: boolean; bar?: boolean }) {
  return (
    <svg width="10" height="10" viewBox="0 0 10 10" className={flip ? "block rotate-180" : "block"} aria-hidden="true">
      <path d="M1 1l7 4-7 4z" fill="#a8a8a8" />{bar && <path d="M9 0h1v10H9z" fill="#a8a8a8" />}
    </svg>
  );
}

function PageBar() {
  return (
    <div className="flex h-[17px] shrink-0">
      <div className="flex w-[926px] shrink-0 items-center border-r border-t border-[#999] pb-px pl-0.5 text-[#a8a8a8]">
        <button aria-label="在前面添加页" className="w-[18px]"><PageIcon /></button>
        <button aria-label="第一页" className="w-4"><NavTri flip bar /></button>
        <button aria-label="上一页" className="w-[15px]"><NavTri flip /></button>
        <span className="w-[46px] whitespace-nowrap pb-0.5 text-[13px] leading-[14px]">1&ensp;的&ensp;1</span>
        <button aria-label="下一页" className="w-[14px]"><NavTri /></button>
        <button aria-label="最后一页" className="w-4"><NavTri bar /></button>
        <button aria-label="在后面添加页" className="w-[22px]"><PageIcon /></button>
        <button className="relative -mt-px h-[17px] w-[46px] text-[13px] leading-[13px] text-black">
          <svg width="48" height="17" viewBox="0 0 48 17" className="absolute inset-0" aria-hidden="true"><path d="M0 0l5 16.500h37L47 0" fill="#fff" stroke="#777" /></svg>
          <span className="relative">页 1</span>
        </button>
        <span className="ml-auto mr-0.5 h-3 w-1 bg-[radial-gradient(#aaa_1px,transparent_1px)] bg-[size:3px_3px]" />
      </div>
      <button aria-label="向左滚动" className="flex w-[17px] shrink-0 items-center justify-center"><Chevron d="left" /></button>
      <div className="my-px min-w-0 flex-1 bg-[#cbcbcb]" />
      <button aria-label="向右滚动" className="flex w-[18px] shrink-0 items-center justify-center"><Chevron d="right" /></button>
      <button aria-label="导航器" className="flex w-4 shrink-0 items-center justify-center bg-white">
        <Ico size={12}><circle cx="7" cy="7" r="5.800" /><path d="m11 11 4.500 4.500" strokeWidth="2" /><path d="M7 4v6M4 7h6" /></Ico>
      </button>
    </div>
  );
}

function DocumentArea() {
  return (
    <section className="flex min-w-0 flex-1 flex-col">
      <div className="flex h-[21px] shrink-0 items-stretch border-b-2 border-[#3a9bd0] bg-[#e8e8e8] text-[13px] leading-[17px]">
        <button aria-label="欢迎屏幕主页" className="flex w-[34px] items-end bg-[#d6d6d6] pb-0.5 pl-0.5"><Ico size={14} box={14}><path d="M7 1 0 8h2v6h3.500v-4h3v4H12V8h2z" fill="#222" stroke="none" /></Ico></button>
        <button className="flex w-20 bg-[#d6d6d6]">欢迎屏幕</button>
        <button className="flex w-24 bg-[#cce0fb] pl-2.5">未命名 -1*</button>
        <button aria-label="新建文档" className="flex w-[21px] items-center justify-center bg-[#d8d8d8]"><Ico size={14} stroke="#aaa"><path d="M8 2v12M2 8h12" strokeWidth="2" /></Ico></button>
      </div>
      <div className="relative flex h-[18px] shrink-0 border-b border-[#d8d8d8]">
        <button aria-label="标尺原点" className="flex w-[18px] shrink-0 items-center justify-center"><Ico size={12} stroke="#888"><path d="M3 2l11 12M3 9V2h8" /><path d="M3 2h12" strokeDasharray="2 1" /></Ico></button>
        <HRuler />
        <span className="absolute right-1 top-0 text-[10px] leading-[14px] text-[#888]">毫米</span>
      </div>
      <div className="flex min-h-0 flex-1">
        <div className="flex w-[18px] shrink-0 border-r border-[#c8c8c8]"><VRuler /></div>
        <div className="flex min-w-0 flex-1 flex-col">
          <div className="flex min-h-0 flex-1">
            <Canvas />
            <div className="flex w-4 shrink-0 flex-col bg-white">
              <button aria-label="向上滚动" className="flex h-[17px] items-center justify-center bg-[#efefef]"><Chevron d="up" /></button>
              <div className="flex-[195]" />
              <div className="mr-px flex-[398] bg-[#cbcbcb]" />
              <div className="flex-[180]" />
              <button aria-label="向下滚动" className="flex h-[17px] items-center justify-center bg-[#efefef]"><Chevron d="down" /></button>
            </div>
          </div>
          <PageBar />
        </div>
      </div>
    </section>
  );
}

const swatches = [
  "#231916", "#3e3a39", "#595757", "#727171", "#898989", "#9fa0a0", "#b5b5b6", "#c9caca", "#dcdddd", "#efefef", "#ffffff",
  "#1d2088", "#00a0e9", "#009944", "#fff100", "#e60012", "#e4007f", "#b04084", "#f08300", "#f5b0b5", "#8a7468", "#d3cce6", "#a59aca",
  "#6c84c8", "#7a68b0", "#9084b0", "#4a5f94", "#59496e", "#7082a8", "#008fdc", "#96d4f6", "#b4cbdc", "#94a7b0", "#707d86", "#4b535c",
  "#557670", "#3e8a74", "#769894", "#54a898", "#56a46c", "#5cc0cf", "#50a8b0", "#b2c8b8", "#d5ead8", "#9fd4a8",
];

function Palette() {
  return (
    <aside className="flex w-[21px] shrink-0 flex-col items-center border-l border-[#c8c8c8] pt-0.5">
      <div className="h-1.5 w-4 bg-[radial-gradient(#bbb_1px,transparent_1px)] bg-[size:3px_3px]" />
      <button aria-label="调色板菜单" className="flex h-[18px] items-center"><svg width="4" height="8" viewBox="0 0 4 8"><path d="M0 0l4 4-4 4z" fill="#666" /></svg></button>
      <button aria-label="取样颜色" className="mt-[3px] flex h-[18px] items-center"><Ico size={12} stroke="#bbb"><path d="m1 15 10-10" strokeWidth="3" /><circle cx="12.500" cy="3.500" r="2.500" fill="#bbb" /></Ico></button>
      <button aria-label="向上" className="mb-[5px] flex h-3 items-center"><Chevron d="up" c="#c4c4c4" /></button>
      <div className="flex min-h-0 w-[18px] flex-1 flex-col overflow-hidden border-x border-t border-[#444]">
        <button aria-label="无填充" className="h-[17px] shrink-0 border-b border-[#444] bg-white"><svg viewBox="0 0 16 16" className="size-4"><path d="M2 14 14 2" stroke="#d02020" /></svg></button>
        {swatches.map((c) => <button key={c} aria-label={`颜色 ${c}`} className="h-[17px] shrink-0 border-b border-[#444]" style={{ backgroundColor: c }} />)}
      </div>
      <button aria-label="向下" className="flex h-5 items-center pb-1.5"><Chevron d="down" c="#b0b0b0" /></button>
    </aside>
  );
}

function DocPalette() {
  return (
    <div className="flex h-[21px] shrink-0 items-center border-y border-[#d8d8d8] pl-0.5">
      <span className="h-4 w-1.5 bg-[radial-gradient(#aaa_1px,transparent_1px)] bg-[size:3px_3px]" />
      <button aria-label="文档调色板菜单" className="ml-[7px]"><svg width="4" height="8" viewBox="0 0 4 8" className="block"><path d="M0 0l4 4-4 4z" fill="#666" /></svg></button>
      <button aria-label="滴管" className="ml-3"><Ico size={12}><path d="m1 15 9-9" strokeWidth="3" stroke="#666" /><path d="m3 13 6-6" stroke="#fff" /><path d="M8.500 3.500l4 4M11 5l3-3" strokeWidth="3.400" /></Ico></button>
      <button aria-label="向左" className="ml-[7px] mr-1"><Chevron d="left" c="#c4c4c4" /></button>
      <div className="flex h-[18px] divide-x divide-[#444] border border-[#444]">
        <button aria-label="无颜色" className="w-[17px] bg-white"><svg viewBox="0 0 16 16" className="size-4"><path d="M3 13 13 3" stroke="#d02020" /></svg></button>
        <button aria-label="红 1" className="w-[17px] bg-[#ea4a35]" />
        <button aria-label="红 2" className="w-[17px] bg-[#e81414]" />
        <button aria-label="红 3" className="w-[17px] bg-[#e61a14]" />
      </div>
      <span className="mb-3 ml-auto mr-1.5 text-sm leading-3 text-[#999]">»</span>
    </div>
  );
}

function StatusBar() {
  return (
    <footer className="relative flex h-8 shrink-0 items-center border-t border-[#e8e8e8] pl-[11px] text-[13px] whitespace-pre">
      <button aria-label="状态栏选项" className="relative w-[25px]"><Gear size={17} /></button>
      <p className="w-[877px]">单击对象两次可旋转/倾斜；双击工具可选择所有对象；按住 Shift 键单击可选择多个对象；按住 Alt 键单击可进行挖掘；按住 Ctrl 并单击可在组中选择</p>
      <p>美术字:&ensp;&ensp;华文宋体 (常规) (CHC) 于 图层 1</p>
      <div className="ml-auto flex w-[487px] items-center">
        {T.fill}
        <span className="ml-0.5 size-[22px] border border-[#aaa] bg-[#231916]" />
        <span className="ml-[5px] flex text-[13px]"><span className="w-[23px]">C:</span><span className="w-9">0 M:</span><span className="w-8">0 Y:</span><span className="w-8">0 K:</span><span className="w-8">100</span></span>
        {T.pen}
        <span className="ml-px size-[22px] border border-[#aaa] bg-white"><svg viewBox="0 0 20 20" className="size-5"><path d="M1 19 19 1" stroke="#c8102c" strokeWidth="1.500" /></svg></span>
        <span className="ml-1">无</span>
      </div>
      <div className="absolute bottom-1.5 right-3 flex h-11 items-center gap-px opacity-90" aria-label="极光下载站">
        <svg width="42" height="40" viewBox="0 0 42 40" aria-hidden="true">
          <path d="M40 3C22-3 2 9 1 24c0 4 3 6 7 6C5 17 20 5 40 3z" fill="#67a8dc" />
          <path d="M32 6C20 8 10 17 12 26c2 5 12 5 18-2-7 2-11 1-11-4 0-6 6-11 13-14z" fill="#8cc4e8" />
          <path d="M22 17c8-5 17-3 17 3C38 30 20 41 3 39c14-1 27-9 28-17 0-4-4-6-9-5z" fill="#7ccb8a" />
          <path d="M3 39c14-1 24-8 27-14-5 6-13 10-24 11z" fill="#e8d84e" />
        </svg>
        <div>
          <div className="text-[21px] font-medium leading-[26px] text-[#8ab4dc]">极光下载站</div>
          <div className="font-['Liberation_Sans',sans-serif] text-[17px] font-bold leading-[18px] text-[#8ad39c]">www.xz7.co</div>
        </div>
      </div>
      <button aria-label="校样颜色" className="absolute bottom-1 right-2.5">
        <svg width="17" height="17" viewBox="0 0 17 17"><path d="M.7.7h15.600v11.600H.7z" fill="#28a8c8" stroke="#222" strokeWidth="1.400" /><path d="M1.500 1.500h14v5h-14z" fill="#d85838" /><circle cx="8.500" cy="6.500" r="2.500" fill="#ddd" stroke="#222" /><path d="M3 15.500h11" stroke="#222" strokeWidth="2" /></svg>
      </button>
    </footer>
  );
}

export default function App() {
  return (
    <div className="relative flex h-screen flex-col overflow-hidden bg-[#f3f3f3] font-['Noto_Sans_CJK_SC',sans-serif] text-black">
      <TitleBar />
      <MenuBar />
      <Toolbar />
      <PropertyBar />
      <div className="flex min-h-0 flex-1">
        <Toolbox />
        <div className="flex min-w-0 flex-1 flex-col">
          <div className="flex min-h-0 flex-1">
            <DocumentArea />
            <Palette />
          </div>
          <DocPalette />
        </div>
      </div>
      <StatusBar />
      <svg width="200" height="80" viewBox="0 0 200 80" className="pointer-events-none absolute left-[20px] top-[60px] z-10 drop-shadow-[2px_3px_2px_#777]" aria-hidden="true">
        <path d="M190 9 31 60" stroke="#8a1515" strokeWidth="3" />
        <path d="M189 8 31 59" stroke="#e31616" strokeWidth="3" />
        <path d="M10 66 32 51l6 13z" fill="#fb0a0a" stroke="#b01010" />
      </svg>
      <div className="absolute bottom-[49px] right-[585px] z-10 flex h-[26px] w-[63px] items-center justify-center gap-1 rounded-md border border-[#bbb] bg-white text-[13px] text-[#333] shadow-[0_2px_3px_#777]">
        CH
        <Ico size={11}><path d="M7 1q10 1 7 9-4 7-13 4 12-2 6-13z" strokeWidth="1.400" /></Ico>
        简
      </div>
    </div>
  );
}
